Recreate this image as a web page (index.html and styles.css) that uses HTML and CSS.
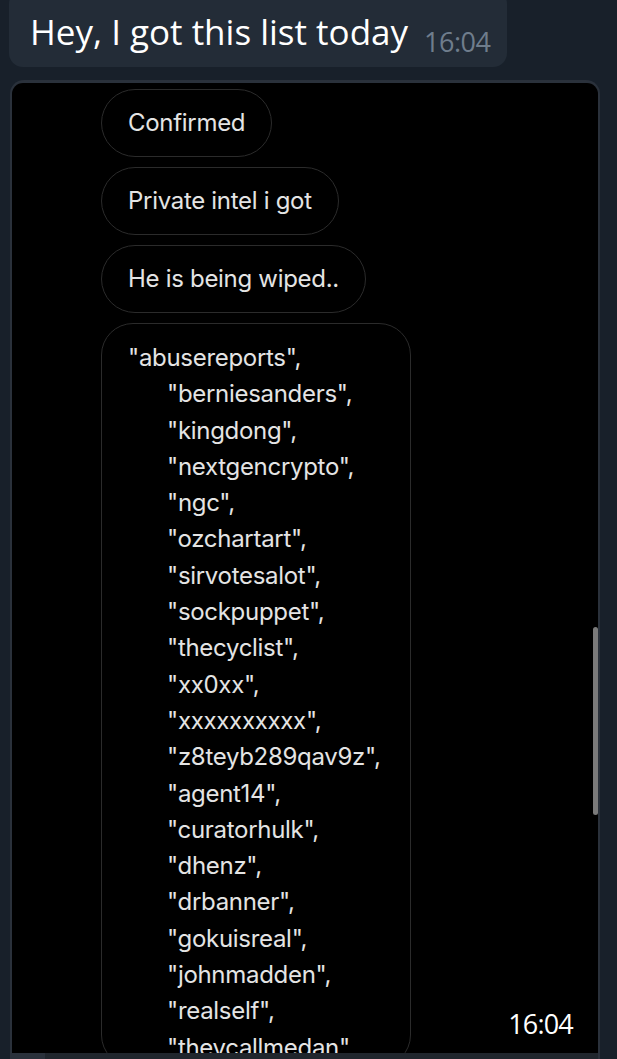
FILE: index.html
```html
<!DOCTYPE html>
<html>
<head>
  <title>Chat</title>
  <link rel="stylesheet" href="styles.css">
</head>
<body>

<div class="chat">
  <div class="bubble">
    <span class="bubble-text">Hey, I got this list today</span>
    <span class="bubble-time">16:04</span>
  </div>

  <!-- Forwarded screenshot -->
  <div class="photo-frame">
    <div class="photo">
      <div class="dm">Confirmed</div>
      <div class="dm">Private intel i got</div>
      <div class="dm">He is being wiped..</div>
      <div class="dm dm-list">
        <div class="line first">"abusereports",</div>
        <div class="line">"berniesanders",</div>
        <div class="line">"kingdong",</div>
        <div class="line">"nextgencrypto",</div>
        <div class="line">"ngc",</div>
        <div class="line">"ozchartart",</div>
        <div class="line">"sirvotesalot",</div>
        <div class="line">"sockpuppet",</div>
        <div class="line">"thecyclist",</div>
        <div class="line">"xx0xx",</div>
        <div class="line">"xxxxxxxxxx",</div>
        <div class="line">"z8teyb289qav9z",</div>
        <div class="line">"agent14",</div>
        <div class="line">"curatorhulk",</div>
        <div class="line">"dhenz",</div>
        <div class="line">"drbanner",</div>
        <div class="line">"gokuisreal",</div>
        <div class="line">"johnmadden",</div>
        <div class="line">"realself",</div>
        <div class="line">"theycallmedan",</div>
      </div>
      <span class="photo-time">16:04</span>
    </div>
    <div class="photo-bottom"></div>
  </div>
</div>

<div class="scrollbar"></div>

</body>
</html>
```

FILE: styles.css
```css
html, body {
  margin: 0;
  height: 1059px;
  overflow: hidden;
}

body {
  background-color: #18202a;
  font-family: "Open Sans", sans-serif;
  position: relative;
}

.chat {
  display: flex;
  flex-direction: column;
  align-items: flex-start;
}

.bubble {
  display: flex;
  align-items: baseline;
  gap: 16px;
  margin-left: 9px;
  margin-top: -10px;
  padding: 14px 17px 8px 21px;
  background-color: #232c37;
  border-radius: 14px;
}

.bubble-text {
  color: #ffffff;
  font-size: 35px;
  line-height: 55px;
}

.bubble-time {
  color: #6f7d8c;
  font-size: 27px;
  letter-spacing: -0.5px;
  position: relative;
  top: 7px;
}

/* Photo message */
.photo-frame {
  align-self: stretch;
  margin: 13px 17px 0 10px;
  padding: 3px 2px 0 2px;
  background-color: #2a313b;
  border-radius: 14px 14px 0 0;
}

.photo {
  position: relative;
  height: 970px;
  padding: 6px 0 0 89px;
  box-sizing: border-box;
  background-color: #000000;
  border-radius: 11px 11px 0 0;
  overflow: hidden;
  display: flex;
  flex-direction: column;
  align-items: flex-start;
  gap: 10px;
  font-family: Inter, "Noto Sans", sans-serif;
}

.photo-bottom {
  height: 8px;
  margin-left: 33px;
  background-color: #20262d;
}

.dm {
  color: #e4e4e4;
  font-size: 24px;
  line-height: 30px;
  padding: 18px 26px;
  border: 1.5px solid #2b2b2b;
  border-radius: 34px;
  letter-spacing: -0.3px;
}

.dm-list {
  width: 310px;
  box-sizing: border-box;
  padding: 16px 0 0 26px;
  border-radius: 32px;
}

.line {
  line-height: 36.3px;
  padding-left: 39px;
}

.line.first {
  padding-left: 0;
}

.photo-time {
  position: absolute;
  right: 22px;
  bottom: 11px;
  padding: 0 3px;
  color: #ffffff;
  font-size: 27px;
  letter-spacing: -0.8px;
  font-family: "Open Sans", sans-serif;
  background-color: rgba(0, 0, 0, 0.5);
  border-radius: 8px;
}

.scrollbar {
  position: absolute;
  left: 593px;
  top: 627px;
  width: 5px;
  height: 188px;
  background-color: #7a7a7a;
  border-radius: 3px;
}
```
